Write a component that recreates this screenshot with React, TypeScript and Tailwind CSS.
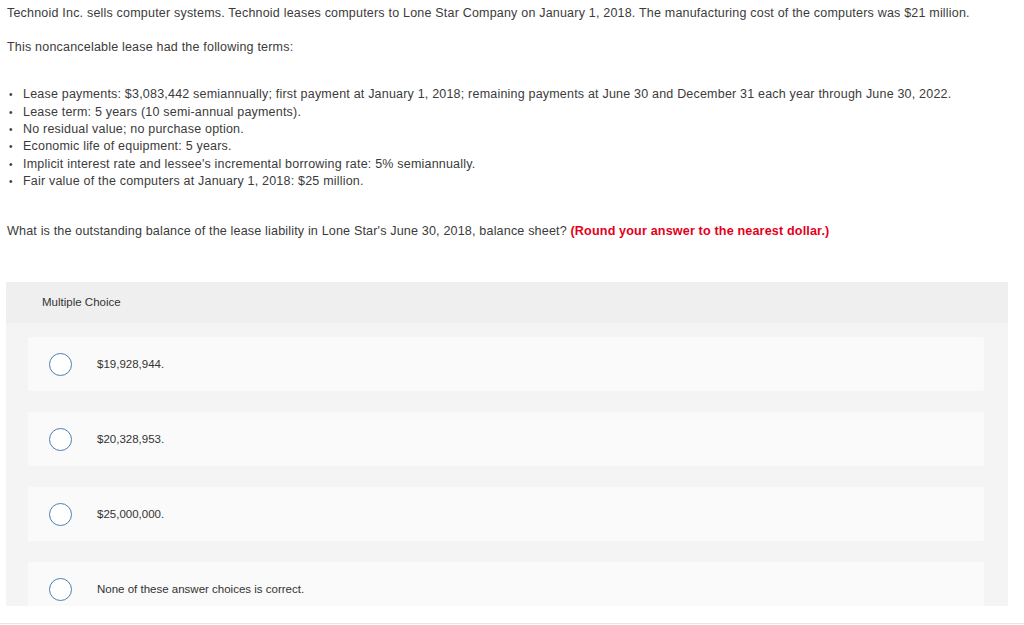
const options = [
  "$19,928,944.",
  "$20,328,953.",
  "$25,000,000.",
  "None of these answer choices is correct.",
];

const terms = [
  "Lease payments: $3,083,442 semiannually; first payment at January 1, 2018; remaining payments at June 30 and December 31 each year through June 30, 2022.",
  "Lease term: 5 years (10 semi-annual payments).",
  "No residual value; no purchase option.",
  "Economic life of equipment: 5 years.",
  "Implicit interest rate and lessee's incremental borrowing rate: 5% semiannually.",
  "Fair value of the computers at January 1, 2018: $25 million.",
];

export default function App() {
  return (
    <div className="h-[625px] overflow-hidden bg-white font-['Liberation_Sans',Arial,sans-serif] text-[#3b3b3b]">
      <div className="h-[624px] border-b border-[#e6e6e6]">
        {/* Enunciado */}
        <div className="pl-[7px] pt-[5px] text-[12.5px] leading-[17px] tracking-[0.2px]">
          <p className="whitespace-nowrap">
            Technoid Inc. sells computer systems. Technoid leases computers to Lone Star Company on January 1, 2018. The
            manufacturing cost of the computers was $21 million.
          </p>
          <p className="mt-[17px]">This noncancelable lease had the following terms:</p>

          <ul className="mt-[30px] pl-[2px]">
            {terms.map((t) => (
              <li key={t} className="flex h-[17.4px] items-center whitespace-nowrap">
                <span className="w-[14px] text-[10px]">•</span>
                <span>{t}</span>
              </li>
            ))}
          </ul>

          <p className="mt-[33px] whitespace-nowrap text-[12.6px] tracking-[0.15px]">
            What is the outstanding balance of the lease liability in Lone Star's June 30, 2018, balance sheet?{" "}
            <strong className="font-bold text-[#e4001b]">(Round your answer to the nearest dollar.)</strong>
          </p>
        </div>

        {/* Multiple choice */}
        <div className="ml-[6px] mr-[16px] mt-[42px] h-[324px] overflow-hidden bg-[#f4f4f4]">
          <div className="flex h-[41px] items-center bg-[#efefef] pl-[36px] text-[11.5px] text-[#333]">
            Multiple Choice
          </div>
          <div className="flex flex-col gap-[21px] pl-[22px] pr-[24px] pt-[14px]">
            {options.map((o) => (
              <div key={o} className="flex h-[54px] shrink-0 items-center rounded-[2px] bg-[#fafafa]">
                <span className="ml-[21px] h-[23px] w-[23px] rounded-full border-[1.5px] border-[#4f7db3] bg-white" />
                <span className="ml-[25px] text-[11.5px] text-[#333]">{o}</span>
              </div>
            ))}
          </div>
        </div>
      </div>
    </div>
  );
}
